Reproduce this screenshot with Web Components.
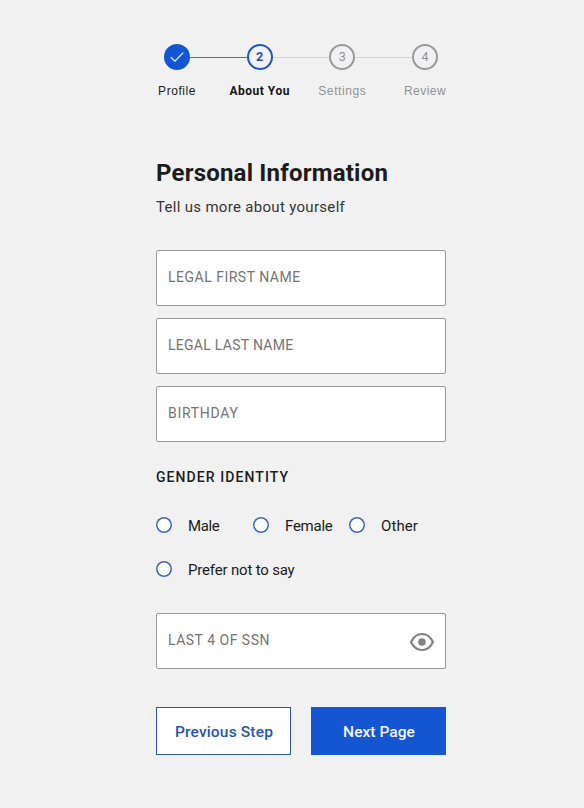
<!DOCTYPE html>
<html lang="en">
<head>
<meta charset="utf-8">
<title>Personal Information</title>
<style>
body{margin:0;background:#f1f1f1;color:#1c1c1c;font-family:Roboto,"Liberation Sans",sans-serif}
</style>
</head>
<body>
<signup-page></signup-page>
<script>
const define=(name,html,setup)=>customElements.define(name,class extends HTMLElement{
  constructor(){
    super();
    const t=document.createElement('template');
    t.innerHTML=html;
    this.attachShadow({mode:'open'}).append(t.content.cloneNode(true));
  }
  connectedCallback(){if(setup)setup(this,this.shadowRoot)}
});

define('step-item',`<style>
:host{display:flex;flex-direction:column;align-items:center;flex:1;color:#929292}
.row{display:flex;align-items:center;width:100%;height:26px}
.line{flex:1;height:1px;background:#d6d6d6}
.dot{box-sizing:border-box;width:26px;height:26px;border:2px solid #999;border-radius:50%;display:flex;align-items:center;justify-content:center;font-size:12.5px;line-height:22px;letter-spacing:0}
svg{display:none}
.label{margin-top:12px;font-family:"Liberation Sans",sans-serif;font-size:12px;line-height:18px;white-space:nowrap}
:host([first]) .before,:host([last]) .after{visibility:hidden}
:host([state=done]) .label{color:#1c1c1c}
:host([state=done]) .dot{background:#1455d1;border-color:#1455d1}
:host([state=done]) svg{display:block}
:host([state=done]) .num{display:none}
:host([state=done]) .after,:host([state=current]) .before{background:#3f72d6;height:1px}
:host([state=current]) .dot{border-color:#1f56c4;color:#1f4fb0;font-weight:700}
:host([state=current]) .label{color:#161616;font-weight:700;font-family:Roboto,sans-serif}
</style>
<div class="row"><span class="line before"></span><span class="dot"><span class="num"></span><svg width="16" height="14" viewBox="0 0 16 14" fill="none" stroke="#e8f0ff" stroke-width="1.3"><path d="M1.8 7.2 6 11.2 14.2 2.6"/></svg></span><span class="line after"></span></div>
<div class="label"><slot></slot></div>`,(h,r)=>{r.querySelector('.num').textContent=h.getAttribute('state')==='done'?'':h.getAttribute('number')});

define('step-bar',`<style>:host{display:flex;width:330.6px;margin-left:-20.3px}</style><slot></slot>`);

define('text-field',`<style>
:host{display:flex;box-sizing:border-box;height:56px;align-items:center;justify-content:space-between;padding:0 11px;background:#fff;border:1px solid #999;border-radius:2px;color:#747474;font-size:14px;line-height:20px}
.t{white-space:nowrap;padding-bottom:2px}
</style><span class="t"><slot></slot></span><slot name="icon"></slot>`);

define('eye-icon',`<style>:host{display:block;width:26px;height:20px;margin:2px -1px 0 0}svg{display:block}</style>
<svg width="26" height="20" viewBox="0 0 26 20"><path d="M2 10C4.600 4.600 8.400 2 13 2s8.400 2.600 11 8c-2.600 5.400-6.400 8-11 8S4.600 15.400 2 10Z" fill="none" stroke="#818181" stroke-width="2.200" stroke-linejoin="round"/><circle cx="13" cy="10" r="3.800" fill="#818181"/></svg>`);

define('radio-option',`<style>
:host{display:flex;align-items:center;gap:16px;height:20px;font-size:15px;line-height:20px;white-space:nowrap}
i{width:16px;height:16px;box-shadow:inset 0 0 0 1.5px #4268bb;border-radius:50%;background:#fff}
span{padding-top:1px}
</style><i></i><span><slot></slot></span>`);

define('action-button',`<style>
:host{display:block;flex:1}
button{display:flex;align-items:center;justify-content:center;box-sizing:border-box;width:100%;height:48px;padding:2px 0 0 1px;border:1px solid #2a58a8;background:#fff;color:#2457b5;font:500 15.5px/20px Roboto,"Liberation Sans",sans-serif;letter-spacing:inherit}
:host([primary]) button{background:#1455d1;border-color:#1455d1;color:#f4f8ff}
</style><button><slot></slot></button>`);

define('signup-page',`<style>
:host{display:block;box-sizing:border-box;width:290px;margin-left:156px;padding-top:44px}
h1{margin:59px 0 0;font-size:24px;line-height:28px;font-weight:700;letter-spacing:.2px;white-space:nowrap}
p{margin:10px 0 0;font-size:15px;line-height:20px;letter-spacing:.31px;color:#363636}
.fields{display:flex;flex-direction:column;gap:12px;margin-top:33px}
h2{margin:25px 0 0;font-size:14px;line-height:20px;font-weight:500;letter-spacing:1.08px}
.options{display:grid;grid-template-columns:97px 96px 97px;row-gap:24px;margin-top:28px}
.wide{grid-column:1/-1}
.ssn{margin-top:34px}
.actions{display:flex;gap:20px;margin-top:38px}
</style>
<step-bar>
<step-item first state="done" number="1" style="letter-spacing:.55px">Profile</step-item>
<step-item state="current" number="2" style="letter-spacing:.5px">About You</step-item>
<step-item number="3" style="letter-spacing:.6px">Settings</step-item>
<step-item last number="4" style="letter-spacing:.46px">Review</step-item>
</step-bar>
<h1>Personal Information</h1>
<p>Tell us more about yourself</p>
<div class="fields">
<text-field style="letter-spacing:.5px">LEGAL FIRST NAME</text-field>
<text-field style="letter-spacing:.28px">LEGAL LAST NAME</text-field>
<text-field style="letter-spacing:.7px">BIRTHDAY</text-field>
</div>
<h2>GENDER IDENTITY</h2>
<div class="options">
<radio-option style="letter-spacing:-.35px">Male</radio-option>
<radio-option style="letter-spacing:-.25px">Female</radio-option>
<radio-option style="letter-spacing:.1px">Other</radio-option>
<radio-option class="wide" style="letter-spacing:-.18px">Prefer not to say</radio-option>
</div>
<text-field class="ssn" style="letter-spacing:.5px">LAST 4 OF SSN<eye-icon slot="icon"></eye-icon></text-field>
<div class="actions">
<action-button style="letter-spacing:.17px">Previous Step</action-button>
<action-button primary style="letter-spacing:.05px">Next Page</action-button>
</div>`);
</script>
</body>
</html>
